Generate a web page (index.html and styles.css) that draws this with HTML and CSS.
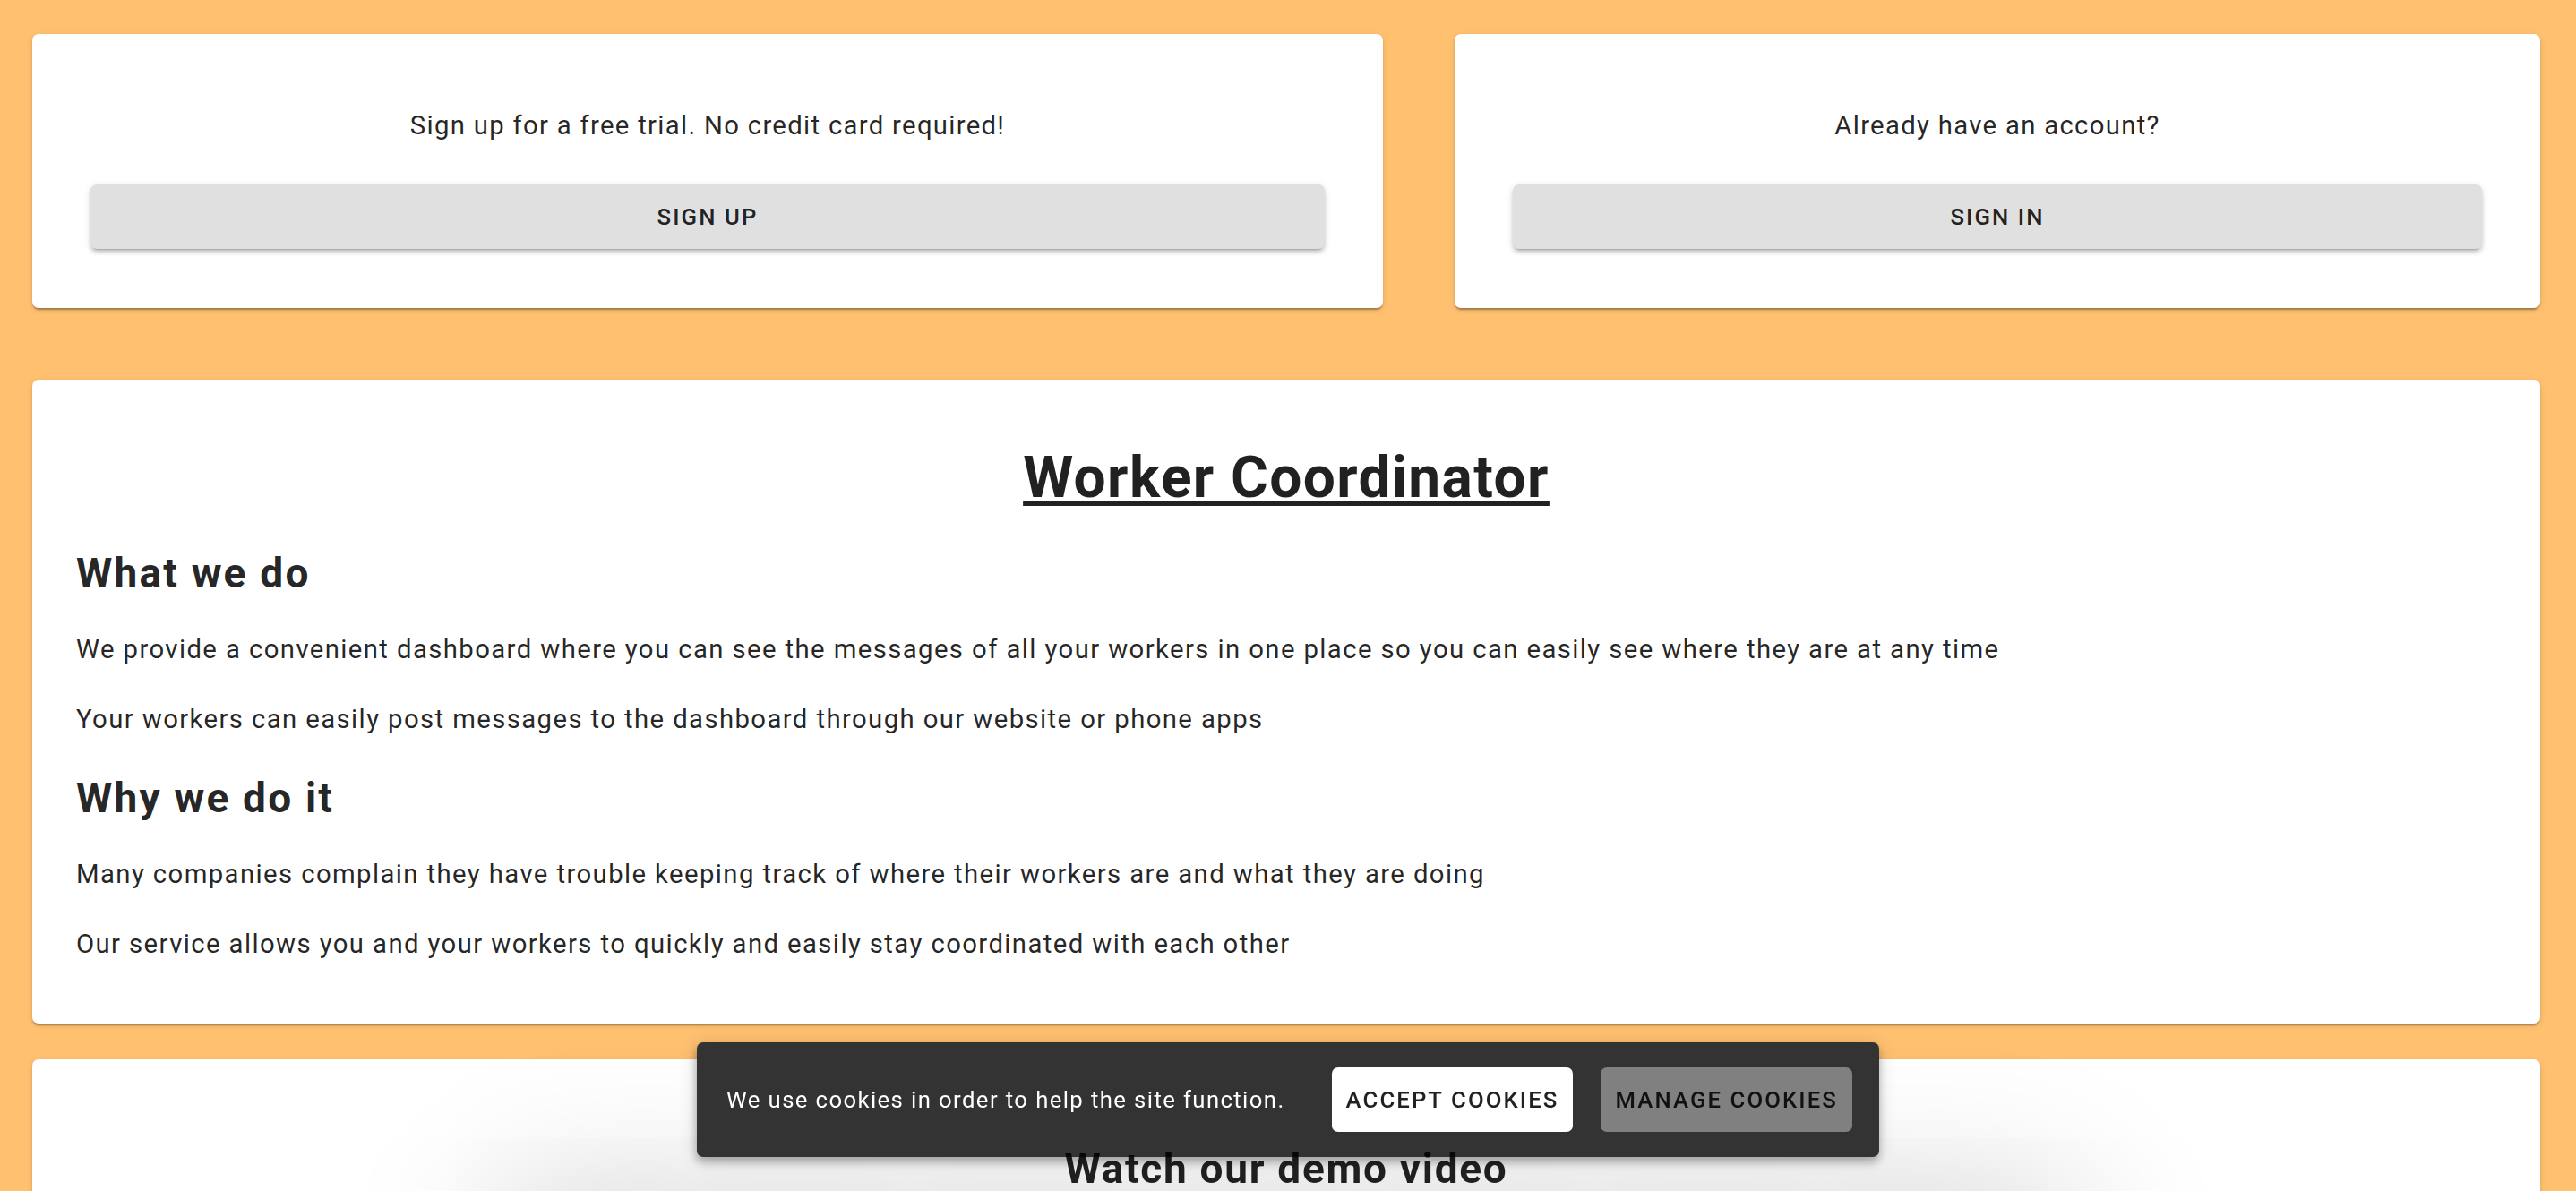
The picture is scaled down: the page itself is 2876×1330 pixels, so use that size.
FILE: index.html
```html
<!DOCTYPE html>
<html lang="en">
<head>
<meta charset="utf-8">
<title>Worker Coordinator</title>
<link rel="stylesheet" href="styles.css">
</head>
<body>
<main class="page">
  <section class="auth-row">
    <div class="card auth-card">
      <p class="auth-text">Sign up for a free trial. No credit card required!</p>
      <button class="btn btn-grey">Sign up</button>
    </div>
    <div class="card auth-card">
      <p class="auth-text">Already have an account?</p>
      <button class="btn btn-grey">Sign in</button>
    </div>
  </section>

  <section class="card info-card">
    <h1 class="title">Worker Coordinator</h1>
    <h2 class="heading">What we do</h2>
    <p class="para">We provide a convenient dashboard where you can see the messages of all your workers in one place so you can easily see where they are at any time</p>
    <p class="para">Your workers can easily post messages to the dashboard through our website or phone apps</p>
    <h2 class="heading heading-next">Why we do it</h2>
    <p class="para">Many companies complain they have trouble keeping track of where their workers are and what they are doing</p>
    <p class="para last">Our service allows you and your workers to quickly and easily stay coordinated with each other</p>
  </section>

  <section class="card video-card">
    <h2 class="heading video-heading">Watch our demo video</h2>
    <div class="video-frame"></div>
  </section>
</main>

<div class="cookie-bar">
  <span class="cookie-text">We use cookies in order to help the site function.</span>
  <button class="btn btn-cookie btn-accept">Accept cookies</button>
  <button class="btn btn-cookie btn-manage">Manage cookies</button>
</div>
</body>
</html>
```

FILE: styles.css
```css
* { box-sizing: border-box; }

html, body {
  margin: 0;
  padding: 0;
}

body {
  background: #ffc170;
  font-family: Roboto, "Liberation Sans", Arial, sans-serif;
  color: rgba(0, 0, 0, 0.87);
  height: 1330px;
  overflow: hidden;
}

.page {
  padding: 38px 40px 0 36px;
}

.card {
  background: #ffffff;
  border-radius: 7px;
  box-shadow: 0 4px 2px -2px rgba(0,0,0,0.2), 0 2px 2px 0 rgba(0,0,0,0.14), 0 2px 6px 0 rgba(0,0,0,0.12);
}

.auth-row {
  display: grid;
  grid-template-columns: 1508fr 1212fr;
  column-gap: 80px;
}

.auth-card {
  padding: 66px 65px 66px 65px;
  display: flex;
  flex-direction: column;
}

.auth-text {
  margin: 14px 0 44px;
  font-size: 29.3px;
  line-height: 44px;
  letter-spacing: 1.3px;
  text-align: center;
}

.btn {
  font-family: Roboto, "Liberation Sans", Arial, sans-serif;
  font-weight: 500;
  font-size: 25.7px;
  letter-spacing: 2.1px;
  text-transform: uppercase;
  border: none;
  border-radius: 7px;
  height: 72px;
  color: rgba(0, 0, 0, 0.87);
  cursor: pointer;
}

.btn-grey {
  background: #e0e0e0;
  width: 100%;
  box-shadow: 0 5px 2px -4px rgba(0,0,0,0.2), 0 4px 4px 0 rgba(0,0,0,0.14), 0 2px 9px 0 rgba(0,0,0,0.12);
}

.info-card {
  margin-top: 80px;
  padding: 72px 49px 67px;
}

.title {
  margin: 0 0 40px;
  text-align: center;
  font-size: 64px;
  line-height: 76px;
  font-weight: 700;
  letter-spacing: 1.4px;
  text-decoration: underline;
  text-decoration-thickness: 5px;
  text-underline-offset: 5px;
}

.heading {
  margin: 0 0 35px;
  font-size: 46px;
  line-height: 56px;
  font-weight: 700;
  letter-spacing: 2.2px;
}

.heading-next {
  margin-top: 38px;
}

.para {
  margin: 0 0 34px;
  font-size: 29.3px;
  line-height: 44px;
  letter-spacing: 1.4px;
}

.para.last {
  margin-bottom: 0;
}

.video-card {
  margin-top: 40px;
  padding: 94px 49px 0;
  height: 600px;
}

.video-heading {
  text-align: center;
  margin: 0;
  letter-spacing: 1.7px;
  position: relative;
  z-index: 1;
}

.video-frame {
  margin: 12px auto 0;
  width: 1756px;
  height: 400px;
  background: #ffffff;
  box-shadow: 0 0 170px 10px rgba(0,0,0,0.2);
}

.cookie-bar {
  position: fixed;
  left: 50%;
  bottom: 38px;
  transform: translateX(-50%);
  display: flex;
  align-items: center;
  background: #333333;
  border-radius: 7px;
  padding: 28px 30px 28px 33px;
  box-shadow: 0 6px 10px rgba(0,0,0,0.25), 0 2px 20px rgba(0,0,0,0.15);
  white-space: nowrap;
}

.cookie-text {
  color: #ffffff;
  font-size: 25.7px;
  line-height: 40px;
  letter-spacing: 1.4px;
  margin-right: 52px;
}

.btn-cookie {
  padding: 0 16px;
}

.btn-accept {
  background: #ffffff;
  margin-right: 31px;
}

.btn-manage {
  background: #808080;
}
```
